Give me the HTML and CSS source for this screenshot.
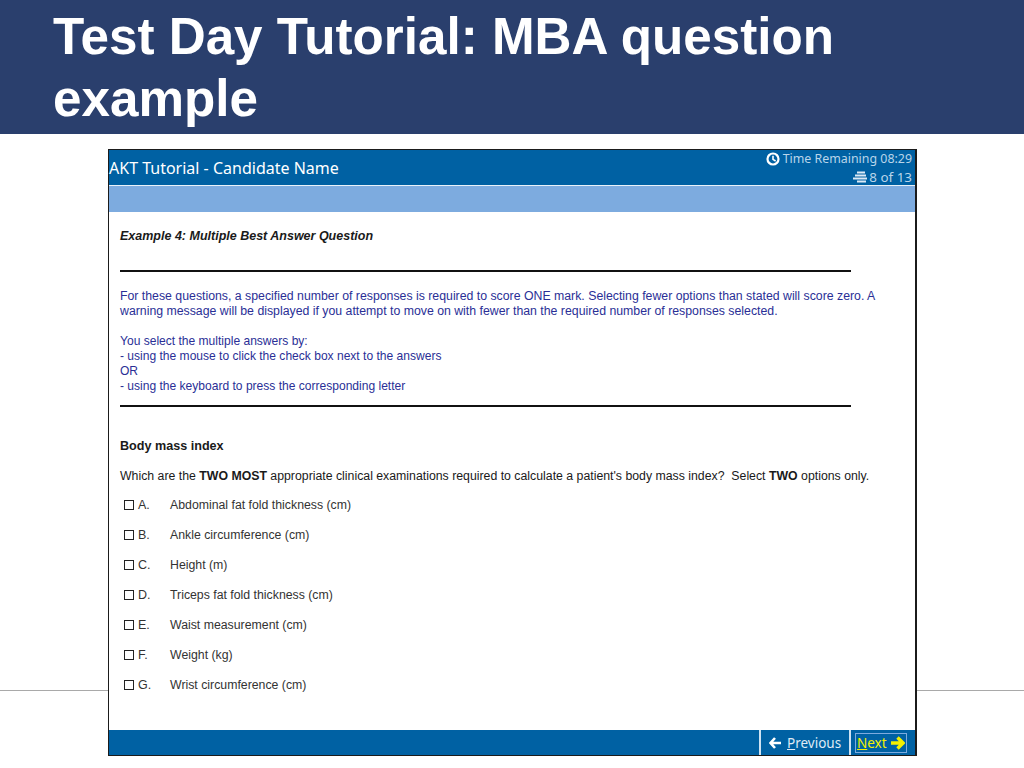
FILE: index.html
```html
<!DOCTYPE html>
<html lang="en">
<head>
<meta charset="utf-8">
<title>Test Day Tutorial: MBA question example</title>
<link rel="stylesheet" href="styles.css">
</head>
<body>
<div class="slide">
  <header class="banner">
    <h1>Test Day Tutorial: MBA question example</h1>
  </header>
  <div class="rule"></div>
  <main class="window">
    <div class="titlebar">
      <div class="app-name">AKT Tutorial - Candidate Name</div>
      <div class="status">
        <div class="status-row">
          <svg class="clock" width="14" height="14" viewBox="0 0 14 14"><circle cx="7" cy="7" r="5.5" fill="none" stroke="#fff" stroke-width="2.2"/><path d="M7 3.8V7.4L9.6 9" fill="none" stroke="#fff" stroke-width="1.6"/></svg>
          <span>Time Remaining 08:29</span>
        </div>
        <div class="status-row count">
          <svg width="16" height="12" viewBox="0 0 16 12"><path d="M5 1.5h8M3 4.5h11M1 7.5h14M5 10.5h9" fill="none" stroke="#dce9f5" stroke-width="2"/></svg>
          <span>8 of 13</span>
        </div>
      </div>
    </div>
    <div class="subbar"></div>
    <div class="content">
      <h2 class="example">Example 4: Multiple Best Answer Question</h2>
      <hr class="divider first">
      <p class="info">For these questions, a specified number of responses is required to score ONE mark. Selecting fewer options than stated will score zero. A<br>warning message will be displayed if you attempt to move on with fewer than the required number of responses selected.</p>
      <p class="info second">You select the multiple answers by:<br>- using the mouse to click the check box next to the answers<br>OR<br>- using the keyboard to press the corresponding letter</p>
      <hr class="divider last">
      <h3 class="topic">Body mass index</h3>
      <p class="question">Which are the <b>TWO MOST</b> appropriate clinical examinations required to calculate a patient's body mass index?&nbsp; Select <b>TWO</b> options only.</p>
      <ul class="options">
        <li><span class="box"></span><span class="letter">A.</span><span>Abdominal fat fold thickness (cm)</span></li>
        <li><span class="box"></span><span class="letter">B.</span><span>Ankle circumference (cm)</span></li>
        <li><span class="box"></span><span class="letter">C.</span><span>Height (m)</span></li>
        <li><span class="box"></span><span class="letter">D.</span><span>Triceps fat fold thickness (cm)</span></li>
        <li><span class="box"></span><span class="letter">E.</span><span>Waist measurement (cm)</span></li>
        <li><span class="box"></span><span class="letter">F.</span><span>Weight (kg)</span></li>
        <li><span class="box"></span><span class="letter">G.</span><span>Wrist circumference (cm)</span></li>
      </ul>
    </div>
    <footer class="navbar">
      <div class="nav-btn prev">
        <svg width="13" height="12" viewBox="0 0 13 12"><path d="M6 1L1.5 6L6 11M2 6H12" fill="none" stroke="#fff" stroke-width="2.6"/></svg>
        <span><u>P</u>revious</span>
      </div>
      <div class="nav-btn next">
        <span class="next-inner"><span class="next-text"><u>N</u>ext</span>
        <svg width="15" height="14" viewBox="0 0 15 14"><path d="M7.5 1.5L13 7L7.5 12.5M12 7H1" fill="none" stroke="#f4f000" stroke-width="3.4"/></svg></span>
      </div>
    </footer>
  </main>
</div>
</body>
</html>
```
FILE: styles.css
```css
* { box-sizing: border-box; }
html, body { margin: 0; padding: 0; background: #fff; }
.slide {
  position: relative;
  width: 1024px;
  height: 768px;
  overflow: hidden;
  font-family: "Liberation Sans", Arial, sans-serif;
}
.banner {
  height: 134px;
  background: #2a3f6d;
  padding: 6px 120px 0 53px;
}
.banner h1 {
  margin: 0;
  color: #fff;
  font-size: 51.2px;
  line-height: 62px;
  font-weight: 700;
}
.rule {
  position: absolute;
  left: 0;
  right: 0;
  top: 690px;
  height: 1px;
  background: #a9a9a9;
}
.window {
  position: relative;
  display: flex;
  flex-direction: column;
  width: 809px;
  height: 607px;
  margin: 15px 0 0 108px;
  background: #fff;
  border: 1px solid #1b1b1b;
  border-right-width: 2px;
}
.titlebar {
  display: flex;
  justify-content: space-between;
  height: 35px;
  background: #0061a3;
  color: #fff;
  flex: none;
}
.app-name {
  padding-top: 1px;
  font-family: "Noto Sans", sans-serif;
  font-size: 16px;
  line-height: 35px;
}
.status {
  padding: 0 3px 0 0;
  font-family: "Noto Sans", sans-serif;
  font-size: 12.4px;
  line-height: 18px;
  color: #b9d5ea;
  text-align: right;
}
.status-row {
  display: flex;
  justify-content: flex-end;
  align-items: center;
  gap: 3px;
}
.status-row.count {
  gap: 1px;
  font-size: 13.4px;
}
.subbar {
  flex: none;
  height: 27px;
  background: #7dabdf;
  border-top: 1px solid #e8f1f9;
}
.content {
  flex: 1;
  padding: 0 0 0 11px;
  font-size: 12.3px;
  line-height: 15px;
  color: #1a1a1a;
}
.example {
  margin: 17px 0 0;
  font-size: 12.5px;
  line-height: 15px;
  font-weight: 700;
  font-style: italic;
}
.divider {
  width: 731px;
  height: 2px;
  margin: 0;
  border: 0;
  background: #111;
}
.divider.first { margin-top: 26px; }
.divider.last { margin-top: 11px; }
.info {
  margin: 17px 0 0;
  color: #2a2f96;
}
.info.second {
  margin-top: 15px;
  font-size: 12.05px;
}
.topic {
  margin: 32px 0 0;
  font-size: 12.6px;
  line-height: 15px;
  font-weight: 700;
}
.question { margin: 15px 0 0; }
.options {
  list-style: none;
  margin: 6px 0 0;
  padding: 0 0 0 4px;
}
.options li {
  display: flex;
  align-items: center;
  height: 30px;
  color: #333;
}
.box {
  width: 10px;
  height: 10px;
  border: 1px solid #222;
  margin-right: 4px;
}
.letter {
  width: 32px;
  font-size: 12.5px;
  line-height: 15px;
}
.navbar {
  flex: none;
  display: flex;
  justify-content: flex-end;
  height: 25px;
  background: #0061a3;
  font-family: "Noto Sans", sans-serif;
  font-size: 13.5px;
  color: #dfeaf5;
}
.nav-btn {
  display: flex;
  align-items: center;
  gap: 5px;
  border-left: 2px solid #cfe2f2;
}
.prev { width: 90px; padding-left: 8px; }
.next { width: 66px; padding-left: 4px; }
.next-inner {
  display: flex;
  align-items: center;
  gap: 3px;
  height: 20px;
  padding: 0 1px;
  border: 1px solid #7dabdf;
}
.next-text { color: #f4f000; }
```
